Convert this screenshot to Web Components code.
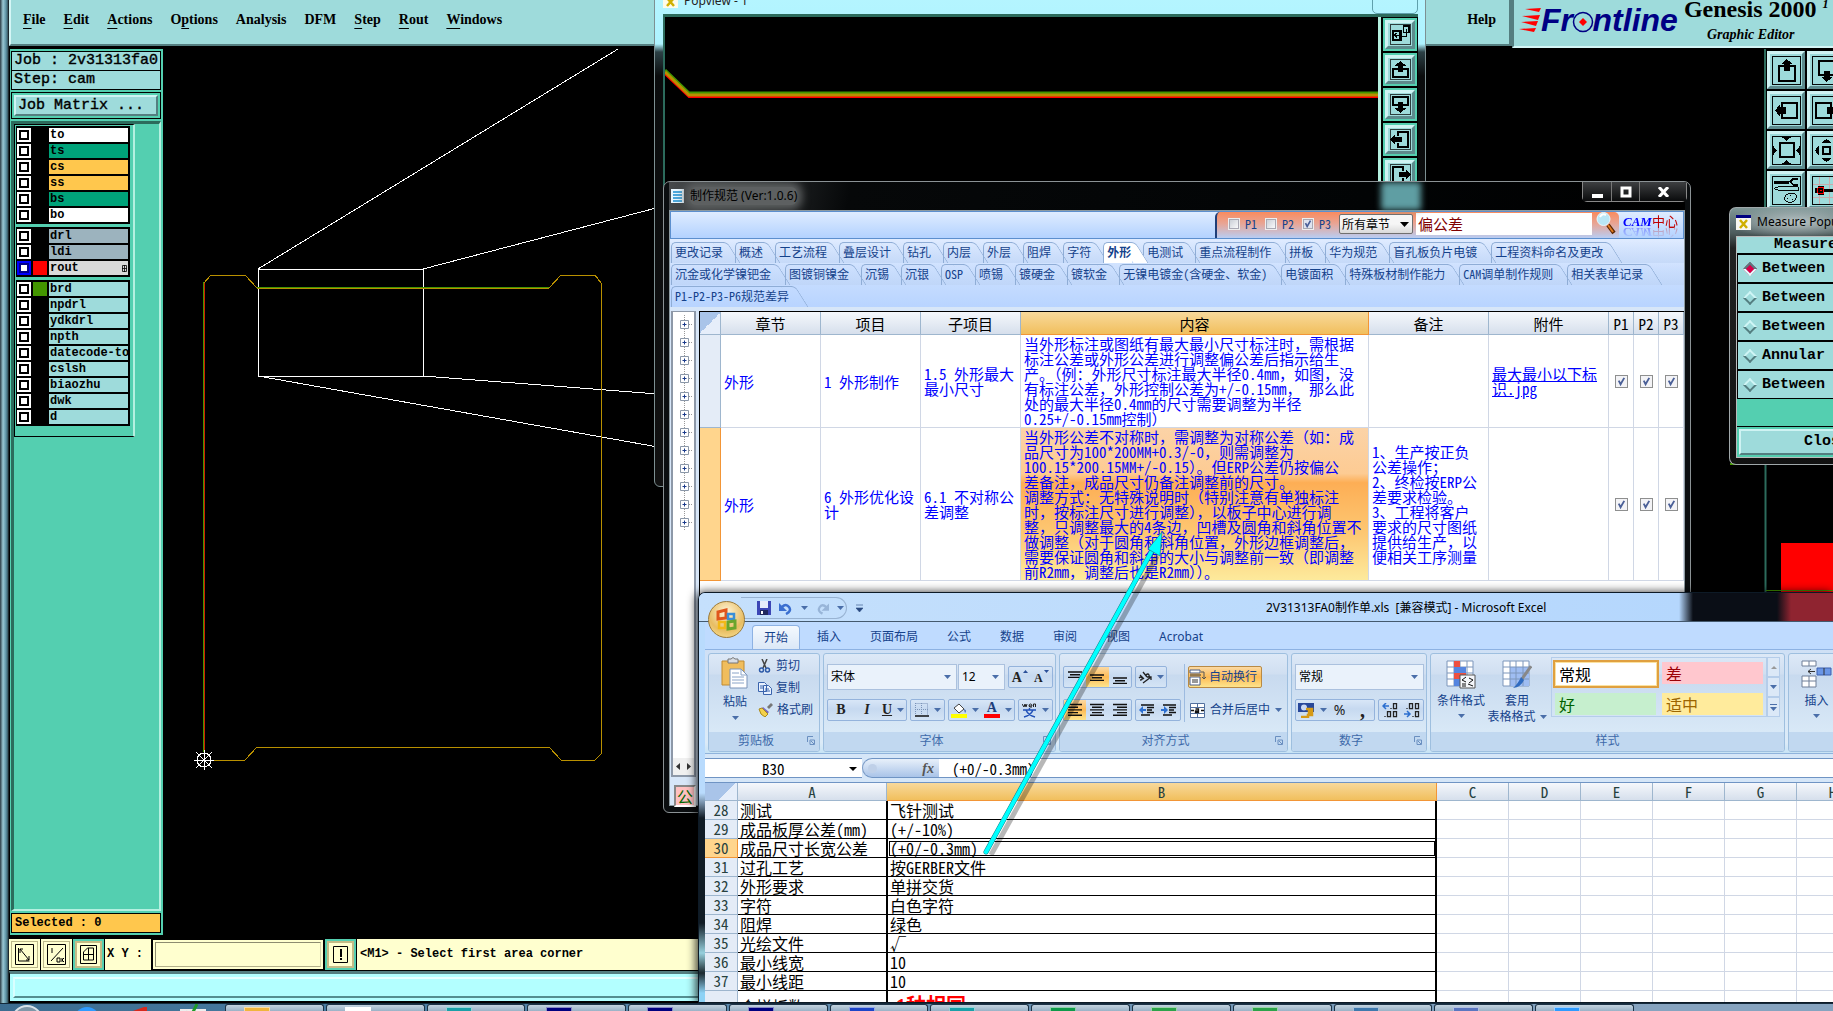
<!DOCTYPE html>
<html lang="zh-CN">
<head>
<meta charset="utf-8">
<title>Genesis 2000</title>
<style>
html,body{height:100%;margin:0;background:#000;overflow:hidden}
body{
  --sim:"Noto Sans Mono CJK SC","Liberation Mono","Noto Sans CJK SC",monospace;
  --ui:"Noto Sans","Noto Sans CJK SC",sans-serif;
  --mono:"Liberation Mono","DejaVu Sans Mono",monospace;
  --serif:"Liberation Serif","Noto Sans CJK SC",serif;
  --aqua:#9edbdb;--teal:#54cfb0;--deep:#2c6b5c;
  font-family:var(--ui);font-size:12px;
}
</style>
</head>
<body>
<desk-top></desk-top>
<script>
const BASE = `*{box-sizing:border-box}button,input,select{font:inherit;color:inherit;margin:0;padding:0;border:0;background:none;border-radius:0}svg{display:block;flex:none}`;
function define(name, css, html) {
  const t = document.createElement('template');
  t.innerHTML = `<style>${BASE}${css}</style>${html}`;
  customElements.define(name, class extends HTMLElement {
    constructor() {
      super();
      this.attachShadow({mode: 'open'}).append(t.content.cloneNode(true));
    }
  });
}

/* ---------- CAM toolbar icons ---------- */
const frame = '<rect x="1.5" y="1.5" width="29" height="29" fill="none" stroke="#000"/>';
const glyph = {
  copy: '<path d="M5 11h11v13H5z" fill="none" stroke="#000" stroke-width="3"/><path d="M20 4h8v9h-8zM17 19h7V8M8 17h8M11 14l-3 3 3 3" fill="none" stroke="#000" stroke-width="2"/>',
  up: '<path d="M12 15H6v12h20V15h-6" fill="none" stroke="#000" stroke-width="3"/><path d="M16 4l8 7h-4v8h-8v-8H8z"/>',
  down: '<path d="M12 17H6V5h20v12h-6" fill="none" stroke="#000" stroke-width="3"/><path d="M16 28l8-7h-4v-8h-8v8H8z"/>',
  left: '<path d="M13 11V5h13v22H13v-6" fill="none" stroke="#000" stroke-width="3"/><path d="M2 16l6-7v3h10v8H8v3z"/>',
  right: '<path d="M19 11V5H6v22h13v-6" fill="none" stroke="#000" stroke-width="3"/><path d="M30 16l-6-7v3H14v8h10v3z"/>',
  up2: '<path d="M13 11H8v16h17V11h-5" fill="none" stroke="#000" stroke-width="2"/><path d="M16 4l6 5h-2v7h-7V9h-2z"/>',
  down2: '<path d="M13 21H8V6h17v15h-5" fill="none" stroke="#000" stroke-width="2"/><path d="M16 28l6-5h-2v-7h-7v7h-2z"/>',
  left2: '<path d="M11 12V8h16v16H11v-4" fill="none" stroke="#000" stroke-width="2"/><path d="M4 16l5-6v2h6v8H9v2z"/>',
  right2: '<path d="M21 12V8H5v16h16v-4" fill="none" stroke="#000" stroke-width="2"/><path d="M28 16l-5-6v2h-6v8h6v2z"/>',
  zin: '<rect x="9" y="8" width="15" height="15" fill="none" stroke="#000" stroke-width="2"/><path d="M11 2h10l-5 4zM11 30h10l-5-4zM2 11v10l4-5zM30 11v10l-4-5z"/>',
  zout: '<rect x="12" y="12" width="8" height="8" fill="none" stroke="#000" stroke-width="2"/><path d="M11 8h10l-5-4zM11 24h10l-5 4zM8 11v10l-4-5zM24 11v10l4-5z"/>',
  tool: '<path d="M3 6h16v3H3z"/><path d="M28 4h-5l-3 3 3 3h5" fill="none" stroke="#000" stroke-width="2"/><path d="M3 14l5-2h20v4H8zM14 24c0-5 10-7 12-3 1 4-3 8-8 7-3 0-4-2-4-4M17 24l1 1M20 21l1 1M22 25h1" fill="none" stroke="#000"/>',
  snap: '<path d="M9 2v28M19 2v28M2 10h28M2 23h28" stroke="#c9a9ab" fill="none"/><path d="M4 13h3v-2h6v3h16v4H13v3H7v-2H4z"/><path d="M7 13h6v6H7zM9.500 15.500h1v1h-1z" fill="none" stroke="#f00"/>'
};
customElements.define('tool-button', class extends HTMLElement {
  constructor() {
    super();
    this.attachShadow({mode: 'open'}).innerHTML = `<style>${BASE}
      :host{display:block;background:var(--ring,var(--aqua));padding:var(--pad,0)}
      button{display:grid;place-items:center;width:100%;height:100%;background:var(--aqua);border:3px solid;border-color:#cff3f3 #5d8b8d #5d8b8d #cff3f3}
      svg{width:var(--ico,31px);height:var(--ico,31px)}</style>
      <button aria-label="${this.getAttribute('icon')}"><svg viewBox="0 0 32 32" shape-rendering="crispEdges">${frame}${glyph[this.getAttribute('icon')]}</svg></button>`;
  }
});

/* ---------- layer list row ---------- */
customElements.define('layer-row', class extends HTMLElement {
  constructor() {
    super();
    const on = this.hasAttribute('on');
    this.attachShadow({mode: 'open'}).innerHTML = `<style>${BASE}
      :host{display:block}
      label{display:flex;gap:2px;height:14px;font:bold 12px/14px var(--mono);color:#000;white-space:nowrap}
      input{appearance:none;flex:none;width:14px;height:14px;background:#fff;border:2px solid #fff;box-shadow:inset 0 0 0 2px #000}
      input:checked{border-color:#00f;box-shadow:inset 0 0 0 2px #00008a}
      i{flex:none;width:14px;background:${this.getAttribute('chip') || '#000'}}
      span{flex:1;min-width:0;display:flex;justify-content:space-between;padding:0 1px;background:${this.getAttribute('fill') || 'var(--aqua)'}}
      svg{align-self:center}</style>
      <label><input type="checkbox" ${on ? 'checked' : ''}><i></i><span><slot></slot>${on ? '<svg width="5" height="7" viewBox="0 0 5 7"><path d="M.5.5h4v6h-4zM2.500 0v7M0 3.500h5" fill="none" stroke="#000" stroke-width=".8"/></svg>' : ''}</span></label>`;
  }
});

/* ---------- CAM workspace ---------- */
define('cam-menu', `
:host{display:flex;height:49px;background:#000;font:bold 14px/18px var(--serif);color:#000}
nav{flex:1;display:flex;align-items:flex-start;gap:18px;background:var(--aqua);height:46px;padding:11px 13px 0 12px;border:solid #547e80;border-width:0 3px 2px 0;border-left:2px solid #d5f6f6}
nav button:last-child{margin-left:auto}
u{text-underline-offset:4px}
.brand{flex:0 0 321px;display:flex;gap:6px;background:var(--aqua);height:48px;padding-left:5px;border-left:2px solid #547e80;border-bottom:2px solid #d5f6f6;overflow:hidden}
.logo{display:flex;align-items:center;height:40px;color:#000084;font:italic bold 32px/40px "Liberation Sans",sans-serif;position:relative}
.logo i{color:transparent}
.logo .ring{position:absolute;left:53px;top:11px}
.name{display:flex;flex-direction:column;font-size:24px;line-height:26px;white-space:nowrap;margin-top:-4px}
.name em{font-size:14px;line-height:18px;padding:4px 0 0 23px}
sup{font:italic bold 12px/12px var(--serif)}
`, `<nav><button><u>F</u>ile</button><button><u>E</u>dit</button><button><u>A</u>ctions</button><button>O<u>p</u>tions</button><button>Analysis</button><button>DFM</button><button><u>S</u>tep</button><button><u>R</u>out</button><button><u>W</u>indows</button><button>Help</button></nav>
<div class="brand"><div class="logo"><svg width="22" height="26" viewBox="0 0 22 26"><path d="M6 2l16-1-2 4zM3 9l18-1-2 5zM2 15l17-1-2 5zM0 22l17-1-2 4z" fill="#f00"/></svg><span>Fr<i>o</i>ntline</span><svg class="ring" width="22" height="22" viewBox="0 0 22 22"><circle cx="11" cy="11" r="9.5" fill="none" stroke="#000084" stroke-width="1.500"/><path d="M11 7l4 4-4 4-4-4z" fill="#f00"/></svg></div>
<div class="name"><span>Genesis 2000 <sup>1</sup></span><em>Graphic Editor</em></div></div>`);

define('cam-layers', `
:host{display:flex;flex-direction:column;flex:none;width:154px;background:var(--teal);padding:2px 2px 2px 1px;font:15px/17px var(--mono);color:#000;border-left:1px solid #000}
.box{background:var(--aqua);border:1px solid #000;height:20px;padding-left:2px;white-space:nowrap;overflow:hidden;-webkit-text-stroke:.4px}
.box+.box{border-top:0;height:19px}
.jm{border:1px solid #000;padding:2px;height:27px;margin:2px 0}
.jm button{display:block;width:100%;height:21px;text-align:left;padding-left:2px;background:var(--aqua);border:2px solid;border-color:#cff3f3 #547e80 #547e80 #cff3f3;line-height:17px;-webkit-text-stroke:.4px}
.pane{flex:1;border:solid;border-width:3px 2px 2px 3px;border-color:var(--deep) #b5f0e0 #b5f0e0 var(--deep)}
.list{width:121px;border:1px solid #000;border-right:2px solid #b5f0e0;padding:1px 3px 10px 1px;display:flex;flex-direction:column;gap:3px}
.g{background:#000;padding:2px 2px 2px 1px;display:flex;flex-direction:column;gap:2px}
.sel{background:#ffc74d;border:1px solid #000;height:20px;margin-top:2px;font:bold 12px/18px var(--mono);padding-left:3px}
`, `<div class="box">Job : 2v31313fa0</div><div class="box">Step: cam</div><div class="jm"><button>Job Matrix ...</button></div>
<div class="pane"><div class="list">
<div class="g"><layer-row fill="#fff">to</layer-row><layer-row fill="#00a37a">ts</layer-row><layer-row fill="#ffc74d">cs</layer-row><layer-row fill="#ffc74d">ss</layer-row><layer-row fill="#00a37a">bs</layer-row><layer-row fill="#fff">bo</layer-row></div>
<div class="g"><layer-row fill="#9cb3be">drl</layer-row><layer-row fill="#9cb3be">ldi</layer-row><layer-row fill="#d9d9d9" chip="#f00" on>rout</layer-row></div>
<div class="g"><layer-row chip="#439600">brd</layer-row><layer-row>npdrl</layer-row><layer-row>ydkdrl</layer-row><layer-row>npth</layer-row><layer-row>datecode-to</layer-row><layer-row>cslsh</layer-row><layer-row>biaozhu</layer-row><layer-row>dwk</layer-row><layer-row>d</layer-row></div>
</div></div><div class="sel">Selected : 0</div>`);

define('cam-canvas', `:host{display:block;flex:1;min-width:0;overflow:hidden;background:#000}`,
`<svg width="1600" height="886" viewBox="163 49 1600 886" fill="none" shape-rendering="crispEdges">
<path d="M618 49L258 269M423 269L660 207M258 376l400 71M423 376l235 18M258 269h165v107H258z" stroke="#fff"/>
<path d="M204 283l7-8h34l12 13h292l12-13h34l6 8v471l-6 6h-34l-12-13H257l-12 13h-34" stroke="#b99000"/>
<path d="M257 287.500h292M203.500 282v470" stroke="#439600"/><path d="M204.500 283v470" stroke="#d02000"/>
<g stroke="#fff"><path d="M194 760h20M204 750v20M196 752l16 16M212 752l-16 16"/><circle cx="204" cy="760" r="7"/></g></svg>`);

define('cam-tools', `:host{display:grid;grid-template-columns:38px 38px;grid-auto-rows:38px;gap:2px;flex:none;width:69px;height:416px;overflow:hidden;background:#000;border-left:2px solid var(--deep);padding:2px 1px}`,
`<tool-button icon="up2"></tool-button><tool-button icon="down2"></tool-button><tool-button icon="left2"></tool-button><tool-button icon="right2"></tool-button><tool-button icon="zin"></tool-button><tool-button icon="zout"></tool-button><tool-button icon="tool"></tool-button><tool-button icon="snap"></tool-button>`);

define('cam-status', `
:host{display:flex;flex-direction:column;flex:none;background:#000;font:bold 12px/16px var(--mono);color:#000;padding-top:4px}
.row{display:flex;height:31px;gap:1px;background:#000}
.b{flex:none;width:31px;background:#ffffcf;display:grid;place-items:center;border:3px solid #ffffcf;outline:1px solid #bdb98b;outline-offset:-3px}
.b.t{border:2px solid var(--teal);outline:2px solid #c4bb86;outline-offset:-4px}
label{background:#ffffcf;width:46px;padding:7px 0 0 2px;white-space:nowrap}
input{width:168px;background:#ffffcf;border:2px solid;border-color:#8d8c70 #d7d5ac #b3b08b #8d8c70;outline:2px solid #ffffcf;outline-offset:-1px;margin:2px}
p{margin:0;flex:1;background:#ffffcf;padding:7px 3px 0;white-space:nowrap}
.cmd{height:32px;margin-top:1px;background:#b3ffff;border:2px solid #000;border-left-width:1px;border-top:3px solid #547e80;display:flex;padding:3px}
.cmd i{flex:1;border:2px solid;border-color:#e6ffff #fff #548f90 #d9ffff}
`, `<div class="row"><button class="b" aria-label="Zoom area"><svg width="19" height="21" viewBox="0 0 19 21" fill="none" stroke="#000"><path d="M.5.5h18v20H.5zM3.500 4v13h11M5 5l9 11M5 9V5h3M14 12v4h-3"/></svg></button><button class="b" aria-label="Toggle scale"><svg width="19" height="21" viewBox="0 0 19 21" fill="none" stroke="#000"><path d="M.5.5h18v20H.5zM16 4L4 17M5 4v5M10 14h3v4h-3zM15 14v4M17 14l-2 2 2 2"/></svg></button><button class="b t" aria-label="Grid"><svg width="17" height="19" viewBox="0 0 17 19" fill="none" stroke="#000"><path d="M.5.5h16v18H.5zM3.500 7l4-4h6v12h-10zM8.500 3v12M3 9.500h11"/></svg></button>
<label for="xy">X Y :</label><input id="xy" type="text"><button class="b t" aria-label="Alert"><svg width="15" height="17" viewBox="0 0 15 17"><path d="M.5.5h14v16H.5z" fill="none" stroke="#000"/><path d="M7 3h2v8H7zM7 12h2v2H7z"/></svg></button><p>&lt;M1&gt; - Select first area corner</p></div>
<div class="cmd"><i></i></div>`);

define('cam-app', `
:host{display:flex;flex-direction:column;padding-left:9px;background:linear-gradient(90deg,#2a3942 0,#9ac8d4 3px,#5d93a5 6px,#37525c 8px,#000 9px)}
.mid{flex:1;display:flex;min-height:0;overflow:hidden;background:#000}`,
`<cam-menu></cam-menu><div class="mid"><cam-layers></cam-layers><cam-canvas></cam-canvas><cam-tools></cam-tools></div><cam-status></cam-status>`);

/* ---------- pop view ---------- */
define('pop-view', `
:host{display:flex;flex-direction:column;background:linear-gradient(#b6f5ff 0,#aef3ff 58px,#2c4146 66px,#0a0c0d 90px,#111 100%);border:1px solid #7d9092;border-radius:6px;padding:0 7px 6px 8px;overflow:hidden}
header{display:flex;align-items:center;gap:6px;height:28px;font-size:12px;color:#222}
.ctl{margin-left:auto;width:46px;height:100%;border:1px solid #5fa0ac;border-radius:5px}
main{flex:1;display:flex;background:#000;border-top:3px solid var(--deep);border-left:2px solid var(--deep)}
main>svg{flex:1;min-width:0}
.bar{width:40px;border-left:3px solid #b5f0e0;padding:1px 1px 0 2px;display:flex;flex-direction:column;gap:2px}
tool-button{height:33px;flex:none;--ring:var(--teal);--pad:2px;--ico:23px}
`, `<header><svg width="15" height="15" viewBox="0 0 15 15"><path d="M0 0h15v15H0z" fill="#fffbe8"/><path d="M0 0h15v3H0z" fill="#003"/><path d="M4 5l7 8M11 5l-7 8" stroke="#cfb000" stroke-width="2.500"/></svg>Popview - 1<span class="ctl"></span></header>
<main><svg height="440" viewBox="0 0 714 440" preserveAspectRatio="xMinYMin slice"><g fill="none"><path d="M0 53l24 23h690" stroke="#439600" stroke-width="3"/><path d="M0 57l24 23h690" stroke="#f00" stroke-width="2"/><path d="M0 55l24 23h690" stroke="#b99000" stroke-width="3"/></g></svg>
<div class="bar"><tool-button icon="copy"></tool-button><tool-button icon="up"></tool-button><tool-button icon="down"></tool-button><tool-button icon="left"></tool-button><tool-button icon="right"></tool-button></div></main>`);

/* ---------- specification window ---------- */
const tabs = [
  '更改记录 概述 工艺流程 叠层设计 钻孔 内层 外层 阻焊 字符 外形 电测试 重点流程制作 拼板 华为规范 盲孔板负片电镀 工程资料命名及更改',
  '沉金或化学镍钯金 图镀铜镍金 沉锡 沉银 OSP 喷锡 镀硬金 镀软金 无镍电镀金(含硬金、软金) 电镀面积 特殊板材制作能力 CAM调单制作规则 相关表单记录',
  'P1-P2-P3-P6规范差异'
].map(r => `<div>${r.split(' ').map(t => `<button class="${t === '外形' ? 'on' : t.length > 5 ? 'long' : ''}"><span>${t}</span></button>`).join('')}</div>`).join('');
define('spec-tabs', `
:host{display:block;background:linear-gradient(#dfebff,#b8d4ff);padding-top:2px;font:12px/20px var(--sim);color:#15428b}
div{display:flex;height:22px;background:linear-gradient(#d7e6fa00,#bcd2f388)}
div:last-child{background:none}
button{position:relative;padding:0 11px 0 5px;white-space:nowrap;flex:none}
.long{padding-right:13px}
button::before{content:"";position:absolute;inset:1px 10px 0 1px;border:1px solid #8fadd6;border-width:1px 0 0 1px;border-radius:5px 0 0 0}
button::after{content:"";position:absolute;right:0;top:1px;bottom:0;width:14px;border:1px solid #8fadd6;border-width:1px 1px 0 0;border-radius:0 5px 0 0;transform:skewX(32deg)}
span{position:relative;z-index:1}
.on{font-weight:bold;z-index:1}.on::before,.on::after{background:#fff}
`, tabs);

define('spec-search', `
:host{display:flex;justify-content:flex-end;height:28px;background:linear-gradient(#dfecff,#b3d2ff);border:1px solid #5c8fce;font:12px/14px var(--sim);color:#15428b}
form{display:flex;align-items:center;width:404px;padding:0 0 3px 11px;background:linear-gradient(#f98b5e,#e8a595 45%,#b9cdf3);border-left:2px solid #1f3e78;border-radius:5px 5px 0 0;margin:0}
label{display:flex;gap:5px;align-items:center;width:37px}
input[type=checkbox]{appearance:none;flex:none;width:12px;height:12px;background:linear-gradient(135deg,#c5cad2,#fff);border:1px solid #eee;outline:1px solid #a9a9b4;outline-offset:-2px}
input[type=checkbox]:checked{background:#dfe3ef url('data:image/svg+xml,<svg xmlns="http://www.w3.org/2000/svg" viewBox="0 0 12 12"><path d="M3 5l2 4 4-7" fill="none" stroke="%234a5f97" stroke-width="2"/></svg>')}
select{display:block;width:74px;height:20px;appearance:none;background:linear-gradient(#f6f6f6 50%,#d9d9d9);border:1px solid #707070;border-radius:2px;padding-left:2px;color:#000}
.s{position:relative}.s svg{position:absolute;right:4px;top:8px}
input[type=text]{width:172px;height:22px;background:#fff;margin-left:3px;font-size:15px;color:#800000;padding-left:2px;flex:1}
form>button{width:27px;display:grid;place-items:center}
.cam{width:64px;padding-left:4px;white-space:nowrap;overflow:hidden;font:13px/18px var(--sim);color:#c00000}
.cam b{font:italic bold 13px/18px var(--serif);color:#00f}
.cam div{height:16px;-webkit-box-reflect:below -2px linear-gradient(transparent 20%,#0006)}
`, `<form><label><input type="checkbox">P1</label><label><input type="checkbox">P2</label><label><input type="checkbox" checked>P3</label>
<div class="s"><select aria-label="章节"><option>所有章节</option></select><svg width="9" height="5"><path d="M0 0h9L4.500 5z"/></svg></div>
<input type="text" aria-label="搜索" value="偏公差"><button type="button" aria-label="查找"><svg width="20" height="25" viewBox="0 0 20 25"><path d="M12 14l6 8" stroke="#5a2500" stroke-width="4"/><path d="M12 14l5 7" stroke="#e07a20" stroke-width="2"/><circle cx="7.500" cy="8" r="6.500" fill="#b9e6f5" stroke="#e4f7ff"/><path d="M4 6q2-4 6-2" stroke="#fff" fill="none" stroke-width="2"/></svg></button></form>
<div class="cam"><div><b>CAM</b>中心</div></div>`);

const chk = '<td class="c"><input type="checkbox" checked aria-label="P"></td>';
define('spec-grid', `
:host{display:block;flex:1;min-width:0;overflow:hidden;background:#fff;border-left:1px solid #000;border-top:1px solid #000}
table{border-collapse:separate;border-spacing:0;table-layout:fixed;width:984px;font:15px/15px var(--sim);color:#00f}
th{height:23px;font-weight:normal;color:#000;background:linear-gradient(#f5f8fc,#d6dfec);border-right:1px solid #9eb6ce;border-bottom:1px solid #9eb6ce;padding:0}
th.s{background:linear-gradient(#f8d99b,#f1bf5d);border-color:#f29536}
td{padding:0 0 0 3px;border-right:1px solid #d0d7e5;border-bottom:1px solid #d0d7e5;white-space:nowrap;overflow:hidden}
.r1 td{height:93px}.r2 td{height:153px}
td.h{background:#e4ecf7;border-color:#9eb6ce}.r2 td.h{background:#ffd58d;border-color:#f29536}
.hot{background:linear-gradient(#fbd3a7 0,#fdcb93 30%,#fdae55 36%,#fdc873 70%,#fdea9c)}
td.c{padding:0;text-align:center}
input{appearance:none;width:13px;height:13px;border:1px solid #8e8f8f;background:#f3f3f6 url('data:image/svg+xml,<svg xmlns="http://www.w3.org/2000/svg" viewBox="0 0 12 12"><path d="M3 5l2 4 4-7" fill="none" stroke="%234a5f97" stroke-width="2"/></svg>')}
th:first-child{background:#a9c4e9 linear-gradient(135deg,#a9c4e9 50%,#e6eefa 50%)}
a{color:#00f}
`, `<table><colgroup><col style="width:21px"><col style="width:100px"><col style="width:100px"><col style="width:100px"><col style="width:348px"><col style="width:120px"><col style="width:120px"><col style="width:25px"><col style="width:25px"><col style="width:25px"></colgroup>
<tr><th></th><th>章节</th><th>项目</th><th>子项目</th><th class="s">内容</th><th>备注</th><th>附件</th><th>P1</th><th>P2</th><th>P3</th></tr>
<tr class="r1"><td class="h"></td><td>外形</td><td>1 外形制作</td><td>1.5 外形最大<br>最小尺寸</td><td>当外形标注或图纸有最大最小尺寸标注时，需根据<br>标注公差或外形公差进行调整偏公差后指示给生<br>产。（例：外形尺寸标注最大半径0.4mm，如图，没<br>有标注公差，外形控制公差为+/-0.15mm， 那么此<br>处的最大半径0.4mm的尺寸需要调整为半径<br>0.25+/-0.15mm控制）</td><td></td><td><a href="#">最大最小以下标<br>识.jpg</a></td>${chk}${chk}${chk}</tr>
<tr class="r2"><td class="h"></td><td>外形</td><td>6 外形优化设<br>计</td><td>6.1 不对称公<br>差调整</td><td class="hot">当外形公差不对称时，需调整为对称公差（如：成<br>品尺寸为100*200MM+0.3/-0，则需调整为<br>100.15*200.15MM+/-0.15）。但ERP公差仍按偏公<br>差备注，成品尺寸仍备注调整前的尺寸。<br>调整方式：无特殊说明时（特别注意有单独标注<br>时，按标注尺寸进行调整），以板子中心进行调<br>整，只调整最大的4条边，凹槽及圆角和斜角位置不<br>做调整（对于圆角和斜角位置，外形边框调整后，<br>需要保证圆角和斜角的大小与调整前一致（即调整<br>前R2mm，调整后也是R2mm））。</td><td>1、生产按正负<br>公差操作；<br>2、终检按ERP公<br>差要求检验。<br>3、工程将客户<br>要求的尺寸图纸<br>提供给生产，以<br>便相关工序测量</td><td></td>${chk}${chk}${chk}</tr></table>`);

define('spec-tree', `
:host{display:flex;flex-direction:column;width:25px;background:#fff;border:2px solid #8d98a8;border-top-width:1px;height:466px;padding-top:3px}
button{width:12px;height:18px;margin-left:7px;display:grid;place-items:center start}
.sc{margin-top:auto;height:17px;background:#f0f0f0;display:flex;justify-content:space-around;align-items:center}
`, Array(12).fill('<button aria-label="展开"><svg width="12" height="18" viewBox="0 0 12 18"><path d="M4.500 0v18M9 9.500h3" stroke="#999" stroke-dasharray="1 1"/><path d="M.5 5.500h8v8h-8z" fill="#fff" stroke="#8a97a8"/><path d="M2.500 9.500h4M4.500 7.500v4" stroke="#1a3a8a"/></svg></button>').join('') +
`<div class="sc"><svg width="4" height="7"><path d="M4 0v7L0 3.500z" fill="#333"/></svg><svg width="4" height="7"><path d="M0 0v7l4-3.500z" fill="#333"/></svg></div>`);

define('spec-window', `
:host{display:flex;flex-direction:column;background:#0b0e10;border:1px solid #8b9295;border-radius:7px 7px 6px 6px;padding:0 5px 6px;overflow:hidden}
header{display:flex;align-items:center;height:28px;gap:6px;font-size:12px;color:#000;background:linear-gradient(100deg,#46494b 0,#060809 180px,#020405 690px,#000 100%)}
header>svg:first-child{margin-left:2px}
h1{font:12px/18px var(--ui);margin:0;background:#5d6061;box-shadow:0 0 8px 5px #5d6061;border-radius:6px}
.glow{margin-left:auto;width:40px;height:28px;background:#5f9ea3;filter:blur(3px)}
.ctl{align-self:flex-start;margin:0 -2px 0 155px;display:flex;border:1px solid #888;border-top:0;border-radius:0 0 5px 5px;height:20px}
.ctl button{width:28px;display:grid;place-items:center;background:linear-gradient(#3d3f41,#0a0b0c)}.ctl button:last-child{width:47px}
.ctl button+button{border-left:1px solid #777}
main{flex:1;display:flex;flex-direction:column;background:#d7e6f8;border:1px solid #8d9aa0;min-height:0}
.row{display:flex;align-items:flex-start;gap:3px;flex:1;min-height:0;padding-top:4px;background:#d7e6f8}
spec-grid{align-self:stretch}
.left{display:flex;flex-direction:column;gap:8px;width:26px;padding-left:1px}
.pub{margin-left:3px;width:22px;height:22px;background:#ffc0c0;border:2px solid;border-color:#888 #fff #fff #888;color:#060;font:16px/18px var(--sim)}
`, `<header><svg width="13" height="14" viewBox="0 0 13 14"><path d="M0 0h13v14H0z" fill="#eaf7ff"/><path d="M2 3h9M2 6h9M2 9h9M2 12h9" stroke="#1b8fd0" stroke-width="1.500"/></svg><h1>制作规范 (Ver:1.0.6)</h1><i class="glow"></i>
<div class="ctl"><button aria-label="最小化"><svg width="11" height="12"><path d="M0 8h11v4H0z" fill="#fff"/></svg></button><button aria-label="最大化"><svg width="12" height="12"><path d="M2 2h8v8H2z" fill="none" stroke="#fff" stroke-width="3"/></svg></button><button aria-label="关闭"><svg width="11" height="10"><path d="M1 0l9 10M10 0L1 10" stroke="#fff" stroke-width="3"/></svg></button></div></header>
<main><spec-search></spec-search><spec-tabs></spec-tabs><div class="row"><div class="left"><spec-tree></spec-tree><button class="pub">公</button></div><spec-grid></spec-grid></div></main>`);

/* ---------- measure popup ---------- */
define('measure-popup', `
:host{display:flex;flex-direction:column;background:linear-gradient(#7e9696 0,#4d5c5d 25px,#222 40px,#111);border:1px solid #a0a8aa;border-right:0;border-radius:7px 0 0 7px;padding:0 0 6px 6px;overflow:hidden;color:#000;font:bold 15px/18px var(--mono)}
header{display:flex;align-items:center;gap:6px;height:28px;font:12px/18px var(--ui);white-space:nowrap;background:radial-gradient(ellipse at 60px 14px,#b9c4c6,#6c7b7c00 70px)}
main{flex:1;display:flex;flex-direction:column;border:1px solid #bbb;border-right:0;background:var(--teal);white-space:nowrap}
h2{margin:0;font:inherit;line-height:16px;background:var(--aqua);padding-left:37px;border-bottom:1px solid #000;height:17px}
label{display:flex;align-items:center;gap:7px;height:29px;background:var(--aqua);border:solid #000;border-width:1px 0 1px 1px;padding-left:7px}
input{appearance:none;flex:none;width:10px;height:10px;transform:rotate(45deg);border:2px solid;border-color:#cff5f5 #547e80 #547e80 #cff5f5}
input:checked{background:#d6004a;border-color:#547e80 #e2ffff #e2ffff #547e80}
.end{margin-top:auto;border-top:1px solid #000;padding:2px}
.end button{display:block;width:180px;height:26px;text-align:left;padding-left:63px;background:var(--aqua);border:2px solid;border-color:#cff3f3 #547e80 #547e80 #cff3f3}
`, `<header><svg width="15" height="15" viewBox="0 0 15 15"><path d="M0 0h15v15H0z" fill="#f8f8f0"/><path d="M0 0h15v3H0z" fill="#000080"/><path d="M4 5l7 8M11 5l-7 8" stroke="#cfb000" stroke-width="2.500"/></svg>Measure Popup</header>
<main><h2>Measure</h2>${['Between', 'Between', 'Between', 'Annular', 'Between'].map((t, i) => `<label><input type="radio" name="m" ${i ? '' : 'checked'}>${t}</label>`).join('')}<div class="end"><button>Close</button></div></main>`);

/* ---------- Excel ---------- */
const dd = '<svg class="dd" width="7" height="4"><path d="M0 0h7L3.500 4z" fill="#4a6ea9"/></svg>';
const lines = (a, y) => `<svg width="16" height="14" viewBox="0 0 16 14"><path d="${a.map((w, i) => `M${w[0]} ${y + i * 2.7}h${w[1]}`).join('')}" stroke="#111" stroke-width="1.4"/></svg>`;
define('ribbon-group', `
:host{display:flex;flex-direction:column;flex:none;height:99px;border:1px solid #9ebfdf;border-radius:3px;background:linear-gradient(#dde9f7 0,#d0dff1 20px,#c8daef 21px,#d9e9f7 80px);overflow:hidden}
.body{flex:1;display:flex;padding:1px 3px 0}
footer{height:19px;background:#c1d8f0;color:#3e6aaa;text-align:center;padding-right:16px;font:12px/18px var(--ui);position:relative}
svg{position:absolute;right:4px;top:4px}
:host([plain]) svg{display:none}
:host([plain]) footer{padding:0}
`, `<div class="body"><slot></slot></div><footer><slot name="name"></slot><svg width="8" height="9" fill="none"><path d="M.5 6V.5H6M3 4h4.500v4.500H3zM4 5l3 3" stroke="#6a8fc0"/></svg></footer>`);

define('excel-ribbon', `
:host{display:flex;flex:none;gap:3px;height:104px;padding:3px 0 0 3px;background:linear-gradient(#cfe0f5,#dcebf8 90%,#c7e3f5);border-top:1px solid #8db2e3;overflow:hidden;color:#15428b;font:12px/16px var(--ui)}
.clip{width:112px}.font{width:233px}.align{width:229px}.num{width:136px}.sty{width:355px}.ins{width:120px}
.col{display:flex;flex-direction:column}
.big{display:flex;flex-direction:column;align-items:center;white-space:nowrap;padding-top:2px}
.small{display:flex;align-items:center;gap:4px;height:22px;white-space:nowrap}
.two{gap:5px;padding-top:8px}
.rowx{display:flex;gap:3px;align-items:center;height:28px}
.field{display:flex;position:relative;align-items:center;background:#eaf2fb;border:1px solid #abc1de;height:26px}
.field .dd{position:absolute;right:5px}
select{appearance:none;width:100%;height:23px;padding-left:3px;color:#000;border:0}
.set{display:flex;height:22px;border:1px solid #94b3dc;border-radius:2px;background:linear-gradient(#d8e6f7,#c6d9f0 45%,#d4e4f5)}
.set button{display:flex;flex:1;align-items:center;justify-content:center;gap:5px;color:#222}
.set .aa{gap:1px;align-items:flex-start;padding-top:3px}
.on,.set .on{background:linear-gradient(#fbd9a3,#fdbb55 50%,#fde48d)}
.wrap{display:flex;align-items:center;gap:3px;width:74px;height:22px;border:1px solid #b98a44;border-radius:2px;white-space:nowrap}
.merge{display:flex;align-items:center;gap:5px;white-space:nowrap;height:22px;padding-left:2px}
.sep{width:1px;height:58px;background:#9dbbe0;margin:9px 3px 0}
.gal{display:grid;grid-template-columns:105px 105px;gap:2px;width:216px;height:60px;margin:2px 0 0 5px;padding:2px 0 0 1px;border:1px solid #b5cdea;font:16px/20px var(--sim)}
.gal button{text-align:left;padding-left:4px;height:22px;margin:2px 2px 0}
.gal .sel{border:2px solid #e0a040;outline:1px solid #fbe2a0;outline-offset:-3px;background:#fff;color:#000;height:28px;margin:0;width:106px;line-height:22px}
.scr{display:flex;flex-direction:column;width:13px;margin-top:2px}.scr button{height:20px;border:1px solid #b5cdea;background:#dbe8f7;display:grid;place-items:center}
.serif{font:bold 14px/16px var(--serif)}
.pct{font-size:14px}
`, `
<ribbon-group class="clip"><button class="big" style="width:46px"><svg width="28" height="32" viewBox="0 0 28 32"><path d="M1 4h22v24H1z" fill="#f0bd5d" stroke="#c08a30"/><path d="M7 2h3q2-3 4 0h3v4H7z" fill="#d9dde3" stroke="#777"/><path d="M9 12h11l6 6v13H9z" fill="#fff" stroke="#7a93b8"/><path d="M20 12v6h6M11 16h7M11 20h12M11 23h12M11 26h12" fill="none" stroke="#8aa4c8"/></svg><span style="padding:5px 0 6px">粘贴</span>${dd}</button>
<div class="col"><button class="small"><svg width="14" height="14" viewBox="0 0 14 14" fill="none"><path d="M4 0l4 9M9 0L5 9" stroke="#444" stroke-width="1.500"/><circle cx="3.500" cy="11" r="2" stroke="#2c5aa8" stroke-width="1.500"/><circle cx="9.500" cy="11" r="2" stroke="#2c5aa8" stroke-width="1.500"/></svg>剪切</button>
<button class="small"><svg width="14" height="14" viewBox="0 0 14 14"><path d="M.5 1.500h6l2 2v7h-8zM5.500 4.500h5l3 3v6h-8z" fill="#e8f1ff" stroke="#3a64ad"/><path d="M7 8h4M7 10h5M2 5h3M2 7h3" stroke="#3a64ad"/></svg>复制</button>
<button class="small"><svg width="15" height="14" viewBox="0 0 15 14"><path d="M9 4l4-4 2 2-4 4z" fill="#777"/><path d="M5 4l6 5-2 2-6-5z" fill="#7a69c0"/><path d="M1 6l3-1 6 6-3 3q-5-2-6-8z" fill="#f4d14c" stroke="#a88a20"/></svg>格式刷</button></div><span slot="name">剪贴板</span></ribbon-group>

<ribbon-group class="font"><div class="col two"><div class="rowx" style="gap:1px"><div class="field" style="width:130px"><select aria-label="字体"><option>宋体</option></select>${dd}</div><div class="field" style="width:47px"><select aria-label="字号"><option>12</option></select>${dd}</div>
<div class="set" style="width:45px;margin-left:2px"><button class="serif aa" aria-label="增大字号">A<svg width="5" height="3"><path d="M0 3h5L2.500 0z" fill="#2a4f98"/></svg></button><button class="serif aa" style="font-size:12px" aria-label="减小字号">A<svg width="5" height="3"><path d="M0 0h5L2.500 3z" fill="#2a4f98"/></svg></button></div></div>
<div class="rowx"><div class="set" style="width:80px"><button class="serif">B</button><button class="serif"><i>I</i></button><button class="serif"><u>U</u>${dd}</button></div>
<div class="set" style="width:35px"><button><svg width="14" height="14" viewBox="0 0 14 14"><path d="M.5.5h12v12M.5 0v12M6.500 0v12M0 6.500h13" fill="none" stroke="#7b93b8" stroke-dasharray="1 1"/><path d="M0 13h14" stroke="#111" stroke-width="1.500"/></svg>${dd}</button></div>
<div class="set" style="width:67px"><button><svg width="16" height="16" viewBox="0 0 16 16"><path d="M3 6l5-4 5 5-5 4z" fill="#fff" stroke="#444"/><path d="M13 7q3 1 1 4z" fill="#2c5aa8"/><path d="M0 12h16v4H0z" fill="#ff0"/></svg>${dd}</button><button class="serif"><span style="border-bottom:4px solid #f00;line-height:12px;color:#1f3d7a;width:16px">A</span>${dd}</button></div>
<div class="set" style="width:35px"><button><svg width="15" height="16" viewBox="0 0 15 16" fill="none"><path d="M0 2l2 3 1-3 1 3 1-3M7 4h3q0-2-1.500-2T7 4q0 1.500 3 1M11.500 5V2h2v3" stroke="#222"/><path d="M1 8h13M7.500 6v2M4 8q2 5 9 7M11 8q-2 5-9 7" stroke="#2050b8" stroke-width="1.500"/></svg>${dd}</button></div></div></div><span slot="name">字体</span></ribbon-group>

<ribbon-group class="align"><div class="col two"><div class="rowx"><div class="set" style="width:69px"><button>${lines([[1,14],[3,10],[1,14]],2)}</button><button class="on">${lines([[1,14],[3,10],[1,14]],5)}</button><button>${lines([[1,14],[3,10],[1,14]],8)}</button></div><div class="set" style="width:32px"><button><svg width="14" height="14" viewBox="0 0 14 14" fill="none" stroke="#222" stroke-width="1.300"><path d="M2 5l4 4M1 8q2-2 3 0t-2 2M5 2l4 5M8 5q2-2 3 0t-2 2M5 13l8-6M13 10V7h-3"/></svg>${dd}</button></div></div>
<div class="rowx"><div class="set" style="width:69px"><button class="on">${lines([[1,14],[1,10],[1,14],[1,10],[1,14]],1.5)}</button><button>${lines([[1,14],[3,10],[1,14],[3,10],[1,14]],1.5)}</button><button>${lines([[1,14],[5,10],[1,14],[5,10],[1,14]],1.5)}</button></div><div class="set" style="width:46px"><button><svg width="16" height="14" viewBox="0 0 16 14"><path d="M2 2h13M8 4.500h7M8 7h5M8 9.500h7M2 12h9" stroke="#111" stroke-width="1.400"/><path d="M0 7l4-4v3h3v2H4v3z" fill="#2c6fd0"/></svg></button><button><svg width="16" height="14" viewBox="0 0 16 14"><path d="M2 2h13M8 4.500h7M8 7h5M8 9.500h7M2 12h9" stroke="#111" stroke-width="1.400"/><path d="M7 7L3 3v3H0v2h3v3z" fill="#2c6fd0"/></svg></button></div></div></div><i class="sep"></i>
<div class="col two"><div class="rowx"><button class="wrap on"><svg width="17" height="17" viewBox="0 0 17 17"><path d="M1 1h10v3H1zM1 8h10v8H1z" fill="#fff" stroke="#4a5f8a"/><path d="M3 11h6M3 13h6M1 6h11" stroke="#333"/><path d="M12 3h3v7M13 8l2 2 2-2" fill="none" stroke="#555"/></svg>自动换行</button></div><div class="rowx"><button class="merge"><svg width="15" height="15" viewBox="0 0 15 15"><path d="M.5.5h14v14H.5zM.5 4.500h14M.5 10.500h14M7.500 0v4M7.500 11v4" fill="#fff" stroke="#52709f"/><path d="M1 7.500h3M11 7.500h3M5.500 6h3v3.500h-3V8H8" fill="none" stroke="#111" stroke-width="1.300"/></svg>合并后居中${dd}</button></div></div><span slot="name">对齐方式</span></ribbon-group>

<ribbon-group class="num"><div class="col two"><div class="rowx"><div class="field" style="width:129px"><select aria-label="数字格式"><option>常规</option></select>${dd}</div></div>
<div class="rowx"><div class="set" style="width:80px"><button><svg width="17" height="16" viewBox="0 0 17 16"><path d="M0 1h16v9H0z" fill="#27479a"/><circle cx="6" cy="5.500" r="3" fill="#c9d8f5"/><path d="M8 7h6v2h-3v2h3v2h-4v2H3" fill="none" stroke="#d69a17" stroke-width="2.500"/></svg>${dd}</button><button class="pct" style="flex:0 0 23px">%</button><button class="serif" style="flex:0 0 23px;font-size:20px">,</button></div>
<div class="set" style="width:46px"><button><svg width="17" height="15" viewBox="0 0 17 15" fill="none"><path d="M7 3H1M4 0L1 3l3 3" stroke="#2c6fd0" stroke-width="1.500"/><path d="M9 5v1M11.500.7h3v5h-3zM3 13v1M5.500 8.700h3v5h-3zM11.500 8.700h3v5h-3z" stroke="#222" stroke-width="1.300"/></svg></button><button><svg width="17" height="15" viewBox="0 0 17 15" fill="none"><path d="M0 11h6M3 8l3 3-3 3" stroke="#2c6fd0" stroke-width="1.500"/><path d="M3 5v1M5.500.7h3v5h-3zM11.500.7h3v5h-3zM9 13v1M11.500 8.700h3v5h-3z" stroke="#222" stroke-width="1.300"/></svg></button></div></div></div><span slot="name">数字</span></ribbon-group>

<ribbon-group class="sty" plain><button class="big" style="width:54px;padding-top:5px"><svg width="30" height="29" viewBox="0 0 30 29"><path d="M1 1h26v25H1zM1 7h26M1 13h26M1 19h26M8 1v25M14 1v25M21 1v25" fill="#fff" stroke="#7d96bb"/><path d="M8 1h6v6H8zM8 13h12v6H8z" fill="#ee5040"/><path d="M8 7h12v6H8zM8 19h6v7H8z" fill="#5585e0"/><path d="M14 15h15v13H14z" fill="#f5f7fb" stroke="#555"/><path d="M20 17l-4 3 4 2M16 24h4M16 26h4M23 18l4 2-4 3M22 24l5 2" stroke="#111" fill="none"/></svg><span style="padding:4px 0 5px">条件格式</span>${dd}</button>
<button class="big" style="width:58px;padding-top:5px"><svg width="30" height="29" viewBox="0 0 30 29"><path d="M1 1h26v25H1z" fill="#fff" stroke="#7d96bb"/><path d="M8 7h19v19H8z" fill="#9fbdf2"/><path d="M1 7h26M1 13h26M1 19h26M8 1v25M14 1v25M21 1v25" stroke="#7d96bb"/><path d="M29 6l-9 13" stroke="#888" stroke-width="3"/><path d="M19 17l3 3q-3 7-11 8 5-4 8-11z" fill="#2f6bc0"/></svg><span style="padding-top:4px">套用</span><span style="display:flex;align-items:center;gap:4px">表格格式${dd}</span></button>
<div class="gal"><button class="sel">常规</button><button style="background:#ffc7ce;color:#9c0006">差</button><button style="background:#c6efce;color:#006100">好</button><button style="background:#ffeb9c;color:#9c6500">适中</button></div><div class="scr"><button aria-label="上"><svg width="6" height="3"><path d="M0 3h6L3 0z" fill="#999"/></svg></button><button aria-label="下">${dd}</button><button aria-label="更多"><svg width="7" height="7"><path d="M0 .5h7" stroke="#4a6ea9"/><path d="M0 3h7L3.500 7z" fill="#4a6ea9"/></svg></button></div><span slot="name">样式</span></ribbon-group>

<ribbon-group class="ins" plain><button class="big" style="width:46px;padding:5px 0 0 3px"><svg width="31" height="28" viewBox="0 0 31 28"><path d="M1 1h14v5H1zM1 16h14v11H1zM8 1v5M8 16v11M1 21h14" fill="#fff" stroke="#6f7f98"/><path d="M16 8h14v7H16z" fill="#6a96e6" stroke="#3a5fae"/><path d="M14 11.500H7M10 9l-3 2.500 3 2.500M23 8v7" fill="none" stroke="#333"/></svg><span style="padding:5px 0">插入</span>${dd}</button></ribbon-group>`);

const rows = [[28, '测试', '飞针测试'], [29, '成品板厚公差(mm)', '(+/-10%)'], [30, '成品尺寸长宽公差', '(+0/-0.3mm)'], [31, '过孔工艺', '按GERBER文件'], [32, '外形要求', '单拼交货'], [33, '字符', '白色字符'], [34, '阻焊', '绿色'], [35, '光绘文件', '√'], [36, '最小线宽', '10'], [37, '最小线距', '10'], [38, '合拼板数', '1种相同']];
define('excel-sheet', `
:host{display:block;flex:1;min-height:0;overflow:hidden;background:#fff;border-top:1px solid #6f94c4}
table{border-collapse:separate;border-spacing:0;table-layout:fixed;width:1164px;font:16px/18px var(--sim);color:#000}
th{font:15px/16px var(--sim);font-weight:normal;height:18px;padding:0;color:#27413e;background:linear-gradient(#f5f8fc,#d6dfec);border-right:1px solid #9eb6ce;border-bottom:1px solid #9eb6ce}
th:first-child{background:#e4ecf7;text-align:center}
thead th:first-child{background:#a9c4e9 linear-gradient(135deg,#a9c4e9 62%,#e6eefa 62%)}
thead .s{background:linear-gradient(#f8d99b,#f1bf5d);border-color:#f29536}
tr.s th{background:#ffd58d;border-color:#f29536}
td{height:19px;padding:0 2px;border-right:1px solid #d0d7e5;border-bottom:1px solid #d0d7e5;white-space:nowrap;overflow:hidden}
td.k{border-bottom-color:#000;border-right:1px solid #000}
td.v{border-bottom-color:#000;border-right:2px solid #000;border-left:1px solid #000}
tr.s .v{outline:1px solid #000;outline-offset:-3px}
.last td{height:30px;vertical-align:top}.last .v{font:bold 20px/22px var(--serif);color:#f00;padding:4px 0 0 8px}.last .k{padding-top:6px}
`, `<table><colgroup><col style="width:33px"><col style="width:149px"><col style="width:550px"><col span="6" style="width:72px"></colgroup><thead><tr><th></th><th>A</th><th class="s">B</th>${[...'CDEFGH'].map(c => `<th>${c}</th>`).join('')}</tr></thead><tbody>${rows.map(r => `<tr class="${r[0] === 30 ? 's' : r[0] === 38 ? 'last' : ''}"><th>${r[0] === 38 ? '' : r[0]}</th><td class="k">${r[1]}</td><td class="v">${r[2]}</td>${'<td></td>'.repeat(6)}</tr>`).join('')}</tbody></table>`);

define('excel-window', `
:host{display:flex;flex-direction:column;border:1px solid #0d1a26;border-right:0;border-radius:7px 0 0 0;padding-left:6px;background:linear-gradient(#b9dbfd 0,#b9dbfd 200px,#111c26 225px,#111c26 330px,#97d0dd 360px,#1c2a30 380px,#8dd2f5 400px);box-shadow:-2px 0 10px #000c}
header{display:flex;align-items:center;height:29px;padding-top:2px;flex:none;margin-left:-6px;border-radius:6px 0 0 0;background:linear-gradient(90deg,#c5e0fc 0,#b5d7fd 980px,#0a0e16 994px,#0a0e16 1078px,#8f2430 1092px);border-bottom:1px solid #44596e}
.qat{display:flex;align-items:center;gap:8px;width:106px;height:22px;margin-left:42px;padding-left:16px;border:1px solid #98b3d2;border-left:0;border-radius:0 11px 11px 0}
.more{margin-left:9px}
h1{font:12px/16px var(--ui);margin:0;margin-left:403px;white-space:pre}
.orb{position:absolute;left:9px;top:8px;width:37px;height:37px;border-radius:50%;background:radial-gradient(circle at 50% 30%,#fff6dc,#e8bd62 60%,#fbe7a0);border:1px solid #9b7a3a;display:grid;place-items:center}
nav{display:flex;gap:5px;height:27px;flex:none;padding:3px 0 0 47px;background:#bfdbff;font:12px/16px var(--ui);color:#15428b}
nav button{padding:0 12px}
nav .on{background:linear-gradient(#f4f9fe,#dbe8f7);border:1px solid #8db2e3;border-bottom:0;border-radius:4px 4px 0 0;padding:0 11px}
.fx{display:flex;height:29px;flex:none;padding:4px 0;background:#d5e6f8;font:15px/19px var(--sim);color:#000;border-top:1px solid #8fb3dc}
.fx>*{background:#fff;border-top:1px solid #6f94c4;border-bottom:1px solid #6f94c4}
.nbx{position:relative;display:flex}.nbx svg{position:absolute;right:5px;top:8px}
.nbx input{width:157px;padding-left:57px}
.rd{width:77px;background:linear-gradient(#e8f0fa,#a9c3e8);border-radius:11px 0 0 11px;border-left:1px solid #7d9cc6;font:italic bold 14px/17px var(--serif);color:#555;padding-right:5px;display:flex;justify-content:space-between;align-items:center}
.rd i{width:9px;height:9px;border-radius:50%;background:#bfd0e8;margin-left:5px}
.f{flex:1;padding-left:13px}
`, `<header><div class="qat"><svg width="14" height="14" viewBox="0 0 14 14"><path d="M0 0h14v14H0z" fill="#3c46b5"/><path d="M3 0h8v7H3z" fill="#e6ecfa"/><path d="M3 9h8v5H3z" fill="#222a60"/><path d="M4 10h2v3H4z" fill="#fff"/></svg><svg width="14" height="13" viewBox="0 0 14 13" fill="none"><path d="M3 5q4-4 7 0t-3 7" stroke="#3a6fd0" stroke-width="2.500"/><path d="M0 1v8h8z" fill="#3a6fd0"/></svg>${dd}<svg width="13" height="13" viewBox="0 0 14 13" fill="none"><path d="M11 5Q7 1 4 5t3 7" stroke="#98b5d8" stroke-width="2.500"/><path d="M14 1v8H6z" fill="#98b5d8"/></svg>${dd}</div><svg class="more" width="7" height="8"><path d="M0 1h7M0 4h7L3.500 8z" fill="#2a4a80" stroke="#2a4a80" stroke-width=".6"/></svg><h1>2V31313FA0制作单.xls  [兼容模式] - Microsoft Excel</h1></header>
<nav><button class="on">开始</button><button>插入</button><button>页面布局</button><button>公式</button><button>数据</button><button>审阅</button><button>视图</button><button>Acrobat</button></nav>
<excel-ribbon></excel-ribbon>
<div class="fx"><div class="nbx"><input type="text" aria-label="名称框" value="B30"><svg width="8" height="4"><path d="M0 0h8L4 4z"/></svg></div><div class="rd"><i></i><span>fx</span></div><input class="f" type="text" aria-label="编辑栏" value="(+0/-0.3mm)"></div>
<excel-sheet></excel-sheet>
<button class="orb" aria-label="Office"><svg width="23" height="23" viewBox="0 0 23 23" fill="none" stroke-width="3"><path d="M3 4l8-2v8L3 11z" stroke="#e0561b"/><path d="M13 6h6v5h-6z" stroke="#3a8fd8" stroke-width="2.500"/><path d="M4 14h6v6H4z" stroke="#f2b818" stroke-width="2.500"/><path d="M13 14l7-1v7l-7 1z" stroke="#6aa52c"/></svg></button>`);

/* ---------- taskbar ---------- */
define('task-bar', `
:host{display:flex;height:8px;overflow:hidden;background:linear-gradient(90deg,#3b6c90,#4a7da3 20%,#86a3bf 90%);border-top:1px solid #14293a;padding:0 199px 0 10px}
.q{display:flex;width:215px;gap:30px;flex:none}
.t{flex:1;display:flex;gap:2px}
.t button{flex:1;background:linear-gradient(#c3d3df,#9ab2c6);border:1px solid #1d3346;border-bottom:0;border-radius:3px 3px 0 0;padding:2px 0 0 18px}
.t i{display:block;width:26px;height:14px;border:1px solid #fff8}
`, `<div class="q"><svg width="34" height="34"><circle cx="17" cy="17" r="15" fill="#7e97a8" stroke="#d9e3ea" stroke-width="2"/></svg><svg width="26" height="26"><circle cx="13" cy="16" r="13" fill="#2f9bff"/></svg><svg width="20" height="20"><path d="M0 8l14-5 3 0v10z" fill="#d8281c"/></svg><svg width="26" height="20"><path d="M0 5h26v15H0z" fill="#eee"/><path d="M6 8l5 4 6-12" stroke="#1f9b28" stroke-width="3" fill="none"/></svg></div><div class="t">${['#f0b53c', '#fff', '#1aa0a8', '#000080', '#000080', '#000080', '#1d45c8', '#1aa0a8', '#0f9a4a', '#2da34a', '#2da34a', '#3f79ad', '#5b76c0', '#2f9bff'].map((c, i) => `<button aria-label="任务${i}"><i style="background:${c}"></i></button>`).join('')}</div>`);

/* ---------- desktop ---------- */
define('desk-top', `
:host{display:block;position:relative;height:100vh;overflow:hidden;background:#000}
cam-app{position:absolute;inset:0 0 8px 0}
pop-view{position:absolute;left:654px;top:-15px;width:772px;height:502px}
spec-window{position:absolute;left:663px;top:181px;width:1028px;height:632px}
.bits{position:absolute;right:0;top:463px;width:104px;height:130px}
measure-popup{position:absolute;left:1729px;right:0;top:207px;height:258px}
excel-window{position:absolute;left:698px;right:0;top:592px;bottom:8px}
.arrow{position:absolute;left:970px;top:520px;pointer-events:none}
task-bar{position:absolute;left:0;right:0;bottom:0}
`, `<cam-app></cam-app><pop-view></pop-view><svg class="bits" viewBox="0 0 104 130"><path d="M36.500 2v128" stroke="#2c6b5c" stroke-width="2"/><path d="M52 80h60v50H52z" fill="#f00"/><path d="M37 127.500h80" stroke="#439600"/><path d="M1 0h34v2H1z" fill="#439600"/></svg><spec-window></spec-window><measure-popup></measure-popup><excel-window></excel-window>
<svg class="arrow" width="210" height="350" viewBox="970 520 210 350"><path d="M991 855L1157 556" stroke="#000" opacity=".28" stroke-width="5"/><path d="M986 852L1154 547" stroke="#157f88" stroke-width="5" stroke-linecap="round"/><path d="M986 852L1154 547" stroke="#0ff" stroke-width="4" stroke-linecap="round"/><path d="M1162 532l-14 17 12 7z" fill="#0ff" stroke="#157f88" stroke-width=".7"/></svg>
<task-bar></task-bar>`);
</script>
</body>
</html>
